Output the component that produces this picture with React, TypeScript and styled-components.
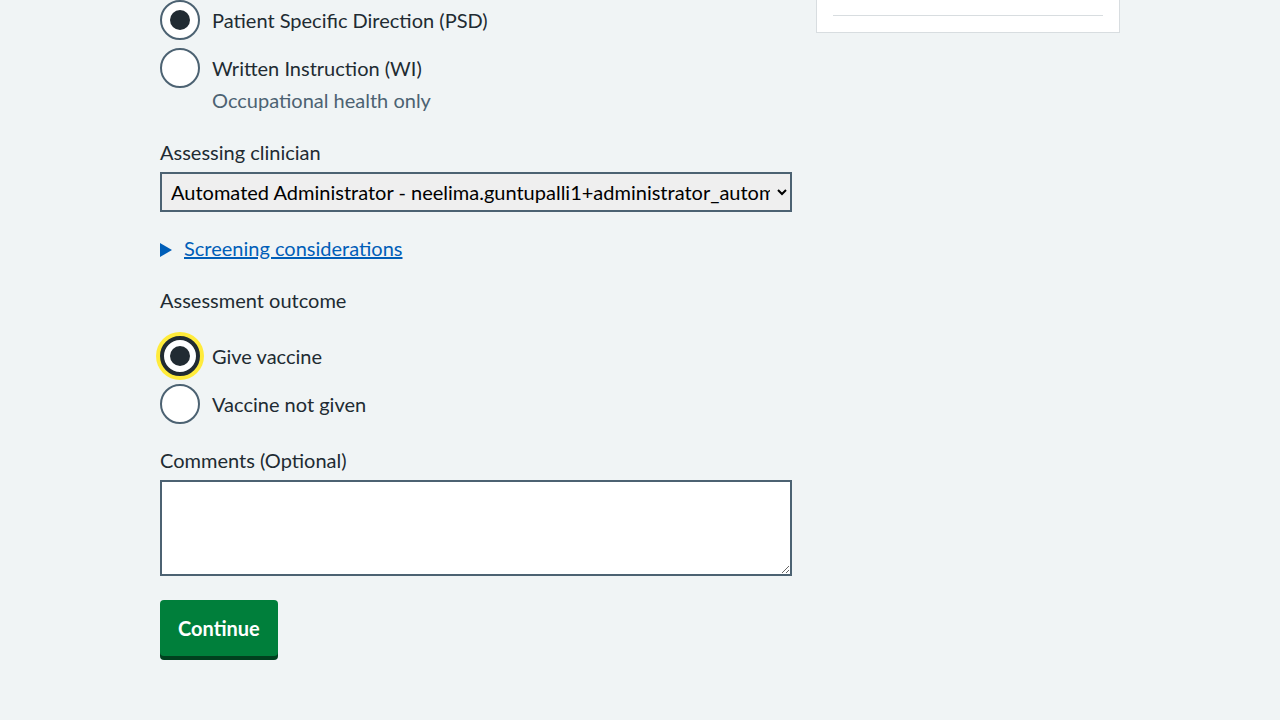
import * as React from 'react';
import styled, { createGlobalStyle } from 'styled-components';

const TextColour = '#212b32';
const SecondaryColour = '#4c6272';
const BorderColour = '#d8dde0';

const GlobalStyle = createGlobalStyle`
    html, body {
        margin: 0;
        padding: 0;
        background: #f0f4f5;
    }
    body {
        font-family: Lato, "Liberation Sans", sans-serif;
        color: ${TextColour};
        font-size: 20px;
        line-height: 28px;
    }
`;

const Page = styled.div`
    width: 960px;
    margin: 0 auto;
    display: grid;
    grid-template-columns: 632px 304px;
    column-gap: 24px;
    align-items: start;
`;

const Form = styled.form`
    display: flex;
    flex-direction: column;
    padding-bottom: 40px;
`;

const FormGroup = styled.div`
    margin-bottom: 24px;
    display: flex;
    flex-direction: column;
`;

const Label = styled.label`
    display: block;
    line-height: 24px;
    margin-bottom: 8px;
`;

const Legend = styled.div`
    line-height: 24px;
    margin-bottom: 24px;
`;

const RadioList = styled.div`
    display: flex;
    flex-direction: column;
    gap: 8px;
`;

const RadioItem = styled.label`
    display: flex;
    align-items: center;
    gap: 12px;
    height: 40px;
    cursor: pointer;
`;

const RadioCircle = styled.span<{ $checked?: boolean; $focused?: boolean }>`
    box-sizing: border-box;
    width: 40px;
    height: 40px;
    flex: none;
    border-radius: 50%;
    background: #fff;
    border: ${p => (p.$focused ? `4px solid ${TextColour}` : `2px solid ${SecondaryColour}`)};
    box-shadow: ${p => (p.$focused ? '0 0 0 4px #ffeb3b' : 'none')};
    display: flex;
    align-items: center;
    justify-content: center;

    &::after {
        content: '';
        display: ${p => (p.$checked ? 'block' : 'none')};
        width: 20px;
        height: 20px;
        border-radius: 50%;
        background: ${TextColour};
    }
`;

const Hint = styled.div`
    color: ${SecondaryColour};
    padding-left: 52px;
    padding-bottom: 4px;
    line-height: 24px;
`;

const Select = styled.select`
    box-sizing: border-box;
    width: 100%;
    height: 40px;
    border: 2px solid ${SecondaryColour};
    background-color: #efefef;
    color: #000;
    font-family: inherit;
    font-size: 20px;
    padding: 0 4px 0 5px;
    border-radius: 0;
`;

const Details = styled.details`
    margin-bottom: 28px;
`;

const Summary = styled.summary`
    list-style: none;
    position: relative;
    padding-left: 24px;
    line-height: 24px;
    color: #005eb8;
    text-decoration: underline;
    cursor: pointer;

    &::-webkit-details-marker {
        display: none;
    }

    &::before {
        content: '';
        position: absolute;
        left: 0;
        top: 7px;
        border-style: solid;
        border-width: 7px 0 7px 12px;
        border-color: transparent transparent transparent #005eb8;
    }
`;

const TextArea = styled.textarea`
    box-sizing: border-box;
    display: block;
    width: 100%;
    height: 96px;
    border: 2px solid ${SecondaryColour};
    background: #fff;
    font-family: inherit;
    font-size: 20px;
    padding: 4px;
    border-radius: 0;
`;

const Button = styled.button`
    appearance: none;
    align-self: flex-start;
    box-sizing: border-box;
    height: 56px;
    padding: 0 18px;
    margin: 0;
    border: 0;
    border-radius: 4px;
    background-color: #007f3b;
    box-shadow: 0 4px 0 0 #00401e;
    color: #fff;
    font-family: inherit;
    font-size: 20px;
    font-weight: 700;
    line-height: 28px;
    cursor: pointer;
`;

const SideCard = styled.div`
    background: #fff;
    border: 1px solid ${BorderColour};
    border-top: 0;
    padding: 15px 16px 16px;
`;

const Rule = styled.hr`
    margin: 0;
    border: 0;
    border-top: 1px solid ${BorderColour};
`;

interface RadioProps {
    label: string;
    checked?: boolean;
    focused?: boolean;
}

const Radio: React.FC<RadioProps> = ({ label, checked, focused }) => (
    <RadioItem>
        <RadioCircle $checked={checked} $focused={focused} />
        <span>{label}</span>
    </RadioItem>
);

const App: React.FC = () => {
    return (
        <>
            <GlobalStyle />
            <Page>
                <Form onSubmit={e => e.preventDefault()}>
                    <FormGroup>
                        <RadioList>
                            <Radio label="Patient Specific Direction (PSD)" checked />
                            <Radio label="Written Instruction (WI)" />
                        </RadioList>
                        <Hint>Occupational health only</Hint>
                    </FormGroup>

                    <FormGroup>
                        <Label htmlFor="clinician">Assessing clinician</Label>
                        <Select id="clinician" defaultValue="auto">
                            <option value="auto">
                                Automated Administrator - neelima.guntupalli1+administrator_automation@nhs.net
                            </option>
                        </Select>
                    </FormGroup>

                    <Details>
                        <Summary>Screening considerations</Summary>
                    </Details>

                    <FormGroup>
                        <Legend>Assessment outcome</Legend>
                        <RadioList>
                            <Radio label="Give vaccine" checked focused />
                            <Radio label="Vaccine not given" />
                        </RadioList>
                    </FormGroup>

                    <FormGroup>
                        <Label htmlFor="comments">Comments (Optional)</Label>
                        <TextArea id="comments" />
                    </FormGroup>

                    <Button type="submit">Continue</Button>
                </Form>

                <SideCard>
                    <Rule />
                </SideCard>
            </Page>
        </>
    );
};

export default App;
